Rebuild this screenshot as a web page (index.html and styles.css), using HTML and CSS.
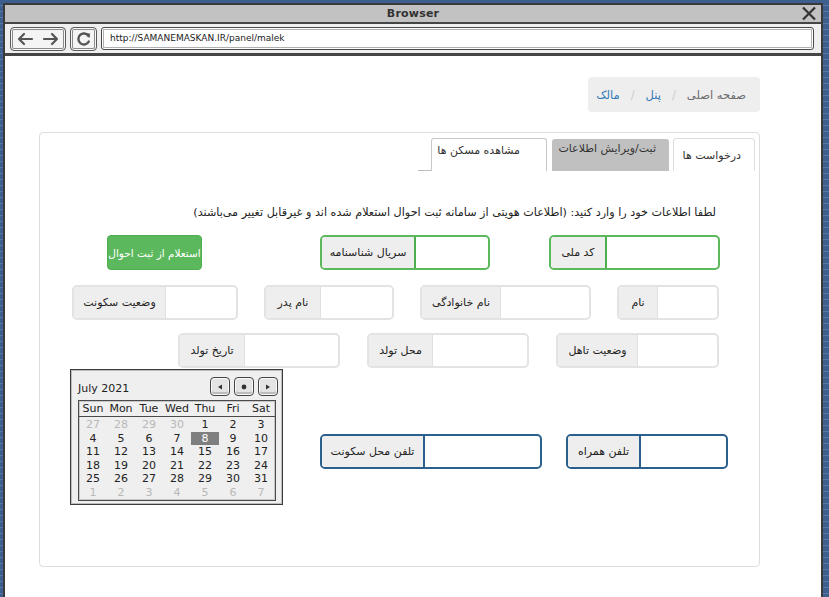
FILE: index.html
```html
<!DOCTYPE html>
<html lang="fa">
<head>
<meta charset="utf-8">
<title>Browser</title>
<link rel="stylesheet" href="styles.css">
</head>
<body>
<div class="window">
  <div class="titlebar">
    <span class="title">Browser</span>
    <svg class="close" width="16" height="15" viewBox="0 0 16 15"><path d="M2 1.5 L14 13.5 M14 1.5 L2 13.5" stroke="#333" stroke-width="2.2" fill="none"/></svg>
  </div>
  <div class="toolbar">
    <div class="tbtn nav">
      <svg width="18" height="14" viewBox="0 0 18 14"><path d="M16 7 H3 M8 2 L3 7 L8 12" stroke="#555" stroke-width="2.2" fill="none" stroke-linecap="round" stroke-linejoin="round"/></svg>
      <svg width="18" height="14" viewBox="0 0 18 14"><path d="M2 7 H15 M10 2 L15 7 L10 12" stroke="#555" stroke-width="2.2" fill="none" stroke-linecap="round" stroke-linejoin="round"/></svg>
    </div>
    <div class="tbtn reload">
      <svg width="16" height="16" viewBox="0 0 16 16"><path d="M12.5 5 A5.5 5.5 0 1 0 12.8 10.5" stroke="#555" stroke-width="2.4" fill="none" stroke-linecap="round"/><path d="M9.5 2.2 L14 2.5 L13.6 7 Z" fill="#555"/></svg>
    </div>
    <div class="url">http://SAMANEMASKAN.IR/panel/malek</div>
  </div>
  <div class="page">
    <div class="crumbs" dir="rtl">
      <span class="crumb-home">صفحه اصلی</span><span class="sep">/</span><a class="crumb-link">پنل</a><span class="sep">/</span><a class="crumb-link">مالک</a>
    </div>
    <div class="panel">
      <div class="tabs">
        <span class="tab-line"></span>
        <div class="tab tab-houses" dir="rtl">مشاهده مسکن ها</div>
        <div class="tab tab-edit" dir="rtl">ثبت/ویرایش اطلاعات</div>
        <div class="tab tab-req" dir="rtl">درخواست ها</div>
      </div>
      <p class="intro" dir="rtl">لطفا اطلاعات خود را وارد کنید: (اطلاعات هویتی از سامانه ثبت احوال استعلام شده اند و غیرقابل تغییر می‌باشند)</p>

      <div class="row row1">
        <button class="btn-inquiry" dir="rtl">استعلام از ثبت احوال</button>
        <div class="grp green g-serial"><span class="lbl">سریال شناسنامه</span><span class="inp"></span></div>
        <div class="grp green g-code"><span class="lbl">کد ملی</span><span class="inp"></span></div>
      </div>

      <div class="row row2">
        <div class="grp gray g-resid"><span class="lbl">وضعیت سکونت</span><span class="inp"></span></div>
        <div class="grp gray g-father"><span class="lbl">نام پدر</span><span class="inp"></span></div>
        <div class="grp gray g-family"><span class="lbl">نام خانوادگی</span><span class="inp"></span></div>
        <div class="grp gray g-name"><span class="lbl">نام</span><span class="inp"></span></div>
      </div>

      <div class="row row3">
        <div class="grp gray g-birthdate"><span class="lbl">تاریخ تولد</span><span class="inp"></span></div>
        <div class="grp gray g-birthplace"><span class="lbl">محل تولد</span><span class="inp"></span></div>
        <div class="grp gray g-marital"><span class="lbl">وضعیت تاهل</span><span class="inp"></span></div>
      </div>

      <div class="row row4">
        <div class="grp blue g-homephone"><span class="lbl">تلفن محل سکونت</span><span class="inp"></span></div>
        <div class="grp blue g-mobile"><span class="lbl">تلفن همراه</span><span class="inp"></span></div>
      </div>

      <div class="calendar">
        <div class="cal-head">
          <span class="cal-title">July 2021</span>
          <div class="cal-btns">
            <span class="cbtn"><svg width="6" height="6" viewBox="0 0 6 6"><path d="M5 0.5 L1 3 L5 5.5 Z" fill="#333"/></svg></span>
            <span class="cbtn"><svg width="6" height="6" viewBox="0 0 6 6"><circle cx="3" cy="3" r="2.4" fill="#333"/></svg></span>
            <span class="cbtn"><svg width="6" height="6" viewBox="0 0 6 6"><path d="M1 0.5 L5 3 L1 5.5 Z" fill="#333"/></svg></span>
          </div>
        </div>
        <div class="cal-grid">
          <div class="cal-week"><span>Sun</span><span>Mon</span><span>Tue</span><span>Wed</span><span>Thu</span><span>Fri</span><span>Sat</span></div>
          <div class="cal-days">
            <span class="out">27</span><span class="out">28</span><span class="out">29</span><span class="out">30</span><span>1</span><span>2</span><span>3</span>
            <span>4</span><span>5</span><span>6</span><span>7</span><span class="sel">8</span><span>9</span><span>10</span>
            <span>11</span><span>12</span><span>13</span><span>14</span><span>15</span><span>16</span><span>17</span>
            <span>18</span><span>19</span><span>20</span><span>21</span><span>22</span><span>23</span><span>24</span>
            <span>25</span><span>26</span><span>27</span><span>28</span><span>29</span><span>30</span><span>31</span>
            <span class="out">1</span><span class="out">2</span><span class="out">3</span><span class="out">4</span><span class="out">5</span><span class="out">6</span><span class="out">7</span>
          </div>
        </div>
      </div>
    </div>
  </div>
</div>
</body>
</html>
```

FILE: styles.css
```css
* { box-sizing: border-box; }

html, body { margin: 0; padding: 0; }

body {
  width: 829px;
  height: 597px;
  overflow: hidden;
  background-color: #3d5f8d;
  background-image: repeating-linear-gradient(180deg, transparent 0 5px, #5877a3 5px 6px);
  font-family: "DejaVu Sans", "Noto Sans", sans-serif;
  padding: 3px 0 0 3px;
}

.window {
  width: 820px;
  height: 594px;
  border: 2px solid #3a3a3a;
  border-bottom: none;
  background: #fff;
  display: flex;
  flex-direction: column;
}

.titlebar {
  height: 19px;
  background: #c2c2c2;
  border-bottom: 2px solid #454545;
  display: flex;
  align-items: center;
  justify-content: center;
  position: relative;
}

.title {
  font-weight: bold;
  font-size: 11px;
  color: #333;
  letter-spacing: 0.2px;
}

.close {
  position: absolute;
  right: 4px;
  top: 1px;
}

.toolbar {
  height: 32px;
  background: #efefef;
  border-bottom: 3px solid #454545;
  display: flex;
  align-items: flex-start;
  gap: 4px;
  padding: 3px 7px 0 5px;
}

.tbtn {
  height: 24px;
  border: 1px solid #5a5a5a;
  border-radius: 4px;
  background: #f4f4f4;
  box-shadow: inset 0 0 0 1px #f8f8f8, inset 0 0 0 2px #8a8a8a;
  display: flex;
  align-items: center;
  justify-content: center;
}

.nav { width: 56px; gap: 8px; }
.reload { width: 27px; }

.url {
  flex: 1;
  height: 23px;
  border: 1px solid #4a4a4a;
  border-radius: 3px;
  background: #fff;
  box-shadow: inset 0 0 0 1px #fff, inset 0 0 0 2px #b0b0b0;
  font-size: 9px;
  color: #222;
  line-height: 21px;
  padding-left: 8px;
}

.page {
  flex: 1;
  padding: 21px 61px 0 34px;
  display: flex;
  flex-direction: column;
}

.crumbs {
  align-self: flex-end;
  width: 172px;
  height: 35px;
  background: #eeeeee;
  border-radius: 4px;
  display: flex;
  align-items: center;
  padding: 0 14px 0 0;
  font-size: 11.5px;
  color: #666;
  white-space: nowrap;
}

.sep { color: #cccccc; padding: 0 11px; }
.crumb-link { color: #337ab7; }
.crumb-home { color: #6b6b6b; }

.panel {
  margin-top: 20px;
  height: 435px;
  border: 1px solid #dddddd;
  border-radius: 4px;
  position: relative;
  padding-top: 5px;
}

.tabs {
  display: flex;
  justify-content: flex-end;
  align-items: flex-end;
  height: 33px;
  padding-right: 4px;
}

.tab-line {
  width: 13px;
  height: 1px;
  background: #bdbdbd;
  align-self: flex-end;
}

.tab {
  font-size: 11px;
  color: #333;
  white-space: nowrap;
}

.tab-houses {
  width: 116px;
  height: 33px;
  border: 1px solid #c8c8c8;
  border-bottom: none;
  border-radius: 3px 3px 0 0;
  padding: 5px 26px 0 0;
  background: #fff;
}

.tab-edit {
  width: 117px;
  height: 32px;
  margin-left: 5px;
  background: #c0c0c0;
  border-radius: 3px 3px 0 0;
  padding: 3px 13px 0 0;
}

.tab-req {
  width: 82px;
  height: 33px;
  margin-left: 4px;
  border: 1px solid #dddddd;
  border-bottom: none;
  border-radius: 4px 4px 0 0;
  background: #fff;
  padding: 10px 13px 0 0;
}

.intro {
  margin: 34px 43px 0 0;
  font-size: 11.2px;
  line-height: 16px;
  color: #222;
  text-align: right;
  white-space: nowrap;
}

.row {
  display: flex;
  justify-content: flex-end;
  align-items: flex-start;
  padding-right: 39px;
}

.row1 { margin-top: 14px; }
.row2 { margin-top: 15px; gap: 26px; padding-right: 40px; }
.row3 { margin-top: 13px; gap: 27px; padding-right: 40px; }
.row4 { margin-top: 66px; gap: 24px; padding-right: 31px; }

.btn-inquiry {
  width: 95px;
  height: 35px;
  margin-right: 118px;
  background: #5cb85c;
  border: 1px solid #4cae4c;
  border-radius: 4px;
  color: #fff;
  font-family: "DejaVu Sans", sans-serif;
  font-size: 10.5px;
  padding: 0;
  white-space: nowrap;
}

.g-serial { margin-right: 59px; }

.grp {
  height: 35px;
  display: flex;
  border: 1px solid #ddd;
  border-radius: 5px;
  overflow: hidden;
  background: #fff;
}

.grp .lbl {
  background: #eeeeee;
  border-right: 1px solid #ddd;
  display: flex;
  align-items: center;
  justify-content: center;
  font-size: 11px;
  color: #222;
  white-space: nowrap;
  direction: rtl;
}

.grp .inp { flex: 1; }

.green { border: 2px solid #5cb85c; }
.green .lbl { border-right: 2px solid #4cae4c; }
.gray { border: 2px solid #e3e3e3; }
.gray .lbl { border-right: 1px solid #e0e0e0; }
.blue { border: 2px solid #2b5f8e; }
.blue .lbl { border-right: 2px solid #2b5f8e; }

.g-code { width: 171px; }
.g-code .lbl { width: 56px; }
.g-serial { width: 170px; }
.g-serial .lbl { width: 94px; }
.g-resid { width: 166px; }
.g-resid .lbl { width: 92px; }
.g-father { width: 130px; }
.g-father .lbl { width: 55px; }
.g-family { width: 171px; }
.g-family .lbl { width: 79px; }
.g-name { width: 102px; }
.g-name .lbl { width: 39px; }
.g-birthdate { width: 162px; }
.g-birthdate .lbl { width: 65px; }
.g-birthplace { width: 162px; }
.g-birthplace .lbl { width: 64px; }
.g-marital { width: 163px; }
.g-marital .lbl { width: 80px; }
.g-homephone { width: 222px; }
.g-homephone .lbl { width: 103px; }
.g-mobile { width: 162px; }
.g-mobile .lbl { width: 73px; }

.calendar {
  position: absolute;
  left: 30px;
  top: 236px;
  width: 213px;
  height: 136px;
  background: #efefef;
  border: 1px solid #3c3c3c;
  box-shadow: inset 0 0 0 1px #bdbdbd;
  padding: 7px 4px 0 7px;
  font-size: 11px;
  color: #222;
}

.cal-head {
  display: flex;
  justify-content: space-between;
  align-items: center;
  height: 19px;
}

.cal-title { padding-top: 4px; }

.cal-btns { display: flex; gap: 4px; }

.cbtn {
  width: 20px;
  height: 19px;
  border: 1px solid #444;
  border-radius: 4px;
  background: #e4e4e4;
  box-shadow: inset 0 0 0 1px #f8f8f8, inset 0 -2px 0 1px #bbb;
  display: flex;
  align-items: center;
  justify-content: center;
}

.cal-grid {
  margin-top: 4px;
  width: 198px;
  border: 1px solid #4a4a4a;
  box-shadow: inset 0 0 0 1px #c8c8c8;
}

.cal-week, .cal-days {
  display: grid;
  grid-template-columns: repeat(7, 28px);
}

.cal-week {
  height: 16px;
  line-height: 16px;
  border-bottom: 1px solid #4a4a4a;
  text-align: center;
}

.cal-days {
  grid-auto-rows: 13.5px;
  line-height: 13.5px;
  text-align: center;
  padding: 1px 0 1px;
}

.cal-days .out { color: #b8b8b8; }
.cal-days .sel { background: #7f7f7f; color: #fff; }
```
